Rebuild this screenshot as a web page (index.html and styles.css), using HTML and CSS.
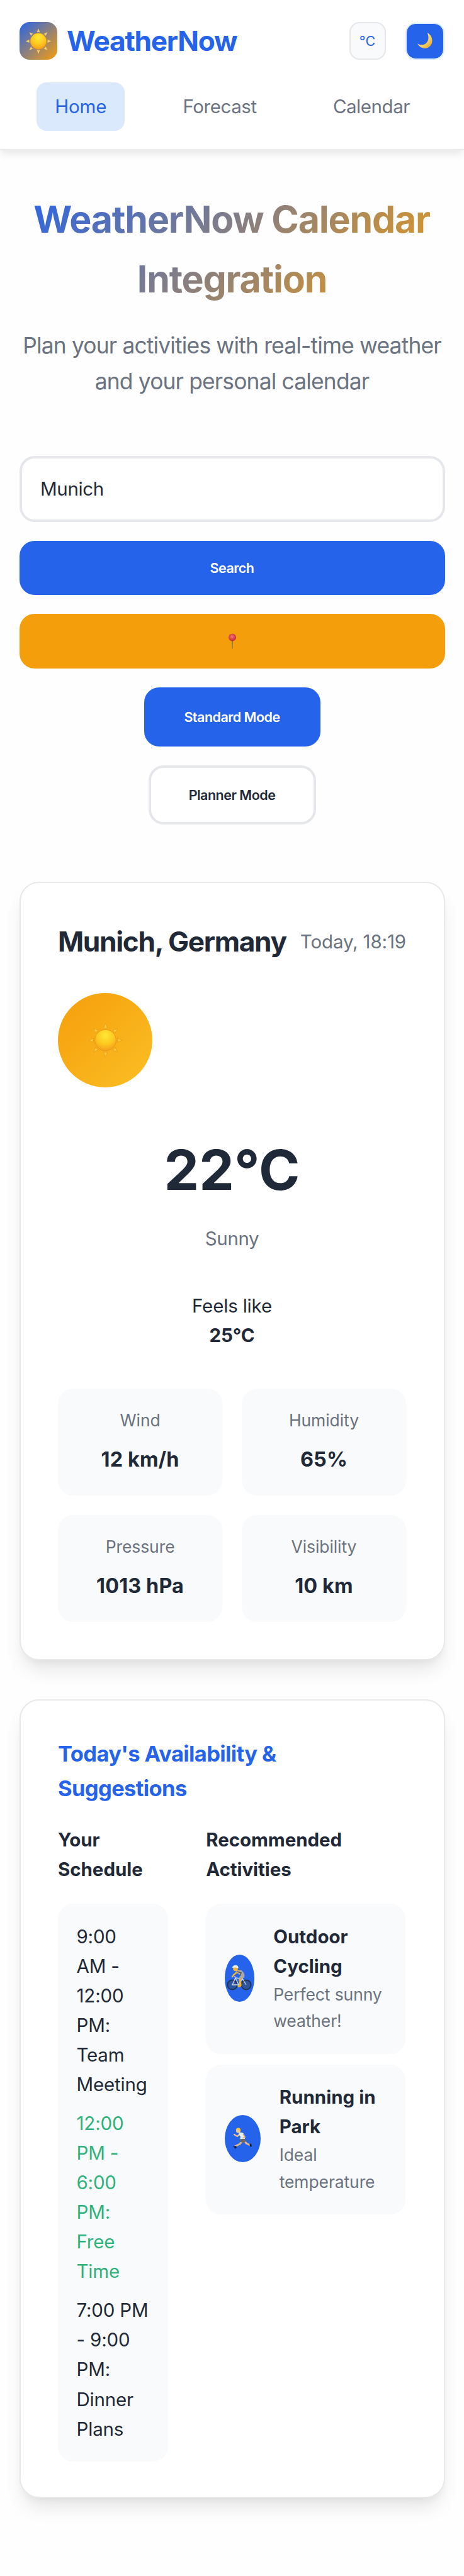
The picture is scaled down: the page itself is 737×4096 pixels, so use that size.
FILE: index.html
```html
<!DOCTYPE html>
<html lang="en">
<head>
<meta charset="utf-8">
<title>WeatherNow</title>
<link rel="stylesheet" href="styles.css">
</head>
<body>
<svg width="0" height="0" class="defs" aria-hidden="true">
  <defs>
    <radialGradient id="sunfill" cx="50%" cy="28%" r="75%">
      <stop offset="0" stop-color="#ffe838"/><stop offset=".55" stop-color="#fdc81f"/><stop offset="1" stop-color="#f39a1b"/>
    </radialGradient>
    <linearGradient id="moonfill" x1="0" y1="0" x2="1" y2="1">
      <stop offset="0" stop-color="#fff0a8"/><stop offset=".6" stop-color="#f6d060"/><stop offset="1" stop-color="#d99a30"/>
    </linearGradient>
    <radialGradient id="pinfill" cx="45%" cy="40%" r="60%">
      <stop offset="0" stop-color="#f2787c"/><stop offset="1" stop-color="#c9222c"/>
    </radialGradient>
    <symbol id="sun" viewBox="0 0 60 60">
      <path id="ray" d="M30 1l3.4 8.6q-3.4-1.4-6.8 0z"/>
      <use href="#ray" transform="rotate(45 30 30)"/>
      <use href="#ray" transform="rotate(90 30 30)"/>
      <use href="#ray" transform="rotate(135 30 30)"/>
      <use href="#ray" transform="rotate(180 30 30)"/>
      <use href="#ray" transform="rotate(225 30 30)"/>
      <use href="#ray" transform="rotate(270 30 30)"/>
      <use href="#ray" transform="rotate(315 30 30)"/>
      <circle cx="30" cy="30" r="18.4" fill="url(#sunfill)" stroke="#e8951a" stroke-width="1"/>
    </symbol>
  </defs>
</svg>

<header class="header">
  <div class="bar">
    <div class="brand">
      <span class="logo"><svg class="logo-sun"><use href="#sun"/></svg></span>
      <span class="brand-name">WeatherNow</span>
    </div>
    <div class="tools">
      <button class="unit">°C</button>
      <button class="theme"><svg viewBox="0 0 26 28" width="26" height="28"><path d="M16.700 1C22.500 4 25.800 10.500 24 17.500 21.500 26.500 8 30 1 18.500 8 22 14 20.500 17 15 19.300 10.800 18.700 5.500 16.700 1z" fill="url(#moonfill)"/></svg></button>
    </div>
  </div>
  <nav class="nav">
    <a class="nav-link active">Home</a>
    <a class="nav-link">Forecast</a>
    <a class="nav-link">Calendar</a>
  </nav>
</header>

<main class="main">
  <section class="hero">
    <h1 class="hero-title">WeatherNow Calendar<br>Integration</h1>
    <p class="hero-text">Plan your activities with real-time weather<br>and your personal calendar</p>
  </section>

  <section class="search">
    <div class="field">Munich</div>
    <button class="btn primary">Search</button>
    <button class="btn locate"><svg viewBox="0 0 14 26" width="14" height="26"><path d="M6 10h2.200l-.5 14.500h-1.200z" fill="#8b7a58"/><circle cx="7" cy="6.500" r="5.900" fill="url(#pinfill)"/></svg></button>
    <button class="mode primary">Standard Mode</button>
    <button class="mode outline">Planner Mode</button>
  </section>

  <section class="card weather">
    <div class="place"><h2 class="city">Munich, Germany</h2><span class="date">Today, 18:19</span></div>
    <div class="condition-icon"><svg class="big-sun"><use href="#sun"/></svg></div>
    <div class="temp">22°C</div>
    <div class="condition">Sunny</div>
    <div class="feels">Feels like<br><strong>25°C</strong></div>
    <div class="metrics">
      <div class="metric"><span class="label">Wind</span><span class="value">12 km/h</span></div>
      <div class="metric"><span class="label">Humidity</span><span class="value">65%</span></div>
      <div class="metric"><span class="label">Pressure</span><span class="value">1013 hPa</span></div>
      <div class="metric"><span class="label">Visibility</span><span class="value">10 km</span></div>
    </div>
  </section>

  <section class="card planner">
    <h3 class="planner-title">Today's Availability &amp;<br>Suggestions</h3>
    <div class="columns">
      <div class="column">
        <h4 class="column-title">Your<br>Schedule</h4>
        <div class="schedule">
          <p class="slot">9:00<br>AM -<br>12:00<br>PM:<br>Team<br>Meeting</p>
          <p class="slot free">12:00<br>PM -<br>6:00<br>PM:<br>Free<br>Time</p>
          <p class="slot">7:00 PM<br>- 9:00<br>PM:<br>Dinner<br>Plans</p>
        </div>
      </div>
      <div class="column">
        <h4 class="column-title">Recommended<br>Activities</h4>
        <div class="activities">
          <div class="activity">
            <span class="badge cycling"><svg viewBox="0 0 40 42" width="40" height="42">
              <g fill="#35507f" fill-opacity=".7" stroke="#20304f" stroke-width="1.800"><circle cx="9" cy="32" r="7.600"/><circle cx="31" cy="32" r="7.600"/></g>
              <path d="M9 32l5-11 11 1-6 10zM14 21l5 11M25 22l6 10M12 18.500l3 2" fill="none" stroke="#cfd8e6" stroke-width="1.300"/>
              <path d="M17 11l-6 5.500-2 2.500" fill="none" stroke="#eab33a" stroke-width="2.600" stroke-linecap="round"/>
              <path d="M26 19l-5 4 1 10-4 2" fill="none" stroke="#f0b429" stroke-width="3.400" stroke-linejoin="round"/>
              <path d="M15 9q8-3 12 4 3 5 0 8l-6 2-1-3 2-3-6-4z" fill="#aaa9a6"/>
              <path d="M17 11l6 2-2 5" fill="none" stroke="#55575e" stroke-width="1.600"/>
              <circle cx="14" cy="6.500" r="3.800" fill="#f3b52f"/>
              <path d="M8.800 5q1-4.500 6-4.300 4 .6 3.800 5l-4-1.200z" fill="#eef0f2"/>
            </svg></span>
            <div class="activity-text"><strong>Outdoor<br>Cycling</strong><span class="note">Perfect sunny<br>weather!</span></div>
          </div>
          <div class="activity">
            <span class="badge running"><svg viewBox="0 0 32 36" width="32" height="36">
              <path d="M17 20l-5 6-8 4" fill="none" stroke="#e3b583" stroke-width="3" stroke-linejoin="round"/>
              <path d="M19 20l3 5 6 3" fill="none" stroke="#e3b583" stroke-width="3" stroke-linejoin="round"/>
              <path d="M1 30l5-1 1 2-2 3zM27 27l3-2 1 5-2 1z" fill="#1b2340"/>
              <path d="M12 10l-4 4-5-3" fill="none" stroke="#edbb86" stroke-width="2.200" stroke-linecap="round" stroke-linejoin="round"/>
              <path d="M11 8q6-1 7 2l2 8-2 2h-6l1-6-3-3z" fill="#e9eef6"/>
              <path d="M12 18h8l2 4-4 2-5-1z" fill="#6d6c61"/>
              <path d="M17 10l3 5-4 2" fill="none" stroke="#e3b583" stroke-width="1.900"/>
              <circle cx="9.500" cy="5" r="3.600" fill="#f3c48e"/>
              <path d="M5.500 3.500q1-3.500 5-3 3.500 1 2.500 5.500l-2-2z" fill="#f4c63b"/>
            </svg></span>
            <div class="activity-text"><strong>Running in<br>Park</strong><span class="note">Ideal<br>temperature</span></div>
          </div>
        </div>
      </div>
    </div>
  </section>
</main>
</body>
</html>
```
FILE: styles.css
```css
* { box-sizing: border-box; margin: 0; padding: 0; }
html { background: #fefefe; }
body {
  width: 737px;
  min-height: 4096px;
  overflow-x: hidden;
  background: #fefefe;
  color: #1f2937;
  font: 400 29.5px/47.1px Inter, "Liberation Sans", sans-serif;
}
button { font-family: inherit; border: 0; display: flex; align-items: center; justify-content: center; }
svg { display: block; }
strong { font-weight: 700; }
.defs { position: absolute; }

.header {
  padding: 35.4px 31px 29px 30.5px;
  background: #fff;
  border-bottom: 2px solid #e8e9eb;
  box-shadow: 0 8px 12px -2px rgba(0, 0, 0, .09);
}
.bar { display: flex; justify-content: space-between; align-items: center; height: 60px; }
.brand { display: flex; align-items: center; gap: 15.5px; }
.logo {
  display: flex; align-items: center; justify-content: center;
  width: 60px; height: 60px; border-radius: 16px;
  background: linear-gradient(135deg, #2563eb, #f59e0b);
}
.logo-sun { width: 42px; height: 43px; fill: #f7cf6a; }
.brand-name { color: #2563eb; font-size: 44.2px; font-weight: 700; letter-spacing: -.0277em; }
.tools { display: flex; gap: 31.500px; align-items: center; }
.unit {
  width: 58px; height: 60px; border-radius: 16px;
  background: #f9fafb; border: 2px solid #e5e7eb;
  color: #2563eb; font-size: 21.500px;
}
.theme { width: 62px; height: 59px; border-radius: 16px; background: #2563eb; border: 2px solid #dbeafe; background-clip: padding-box; }
.nav { display: flex; justify-content: space-between; margin: 35.800px 26px 0 27.800px; }
.nav-link { height: 77px; padding: 0 29px; line-height: 77px; border-radius: 16px; color: #6b7280; letter-spacing: -.015em; }
.nav-link.active { background: #dbe9fc; color: #2563eb; letter-spacing: -.006em; }

.main { padding: 62px 30.500px 0; }
.hero { text-align: center; }
.hero-title {
  font-size: 59px; line-height: 95px; font-weight: 700; letter-spacing: -.0205em;
  background: linear-gradient(135deg, #2563eb, #f59e0b);
  -webkit-background-clip: text; background-clip: text; color: transparent;
  text-indent: -1px;
}
.hero-text { margin-top: 31px; font-size: 35.400px; line-height: 56.500px; letter-spacing: -.0236em; color: #6b7280; white-space: nowrap; }

.search { display: flex; flex-direction: column; align-items: center; gap: 30.200px; margin-top: 90px; }
.field {
  width: 100%; height: 104.400px; padding: 0 29.500px; line-height: 96.400px;
  border: 4px solid #e5e7eb; border-radius: 24px; background: #fff; letter-spacing: -.012em;
}
.btn { width: 100%; height: 86.500px; border-radius: 24px; }
.btn, .mode { font-size: 21.500px; font-weight: 600; letter-spacing: -.024em; }
.primary { background: #2563eb; color: #fff; }
.locate { background: #f59e0b; }
.mode { width: 280px; height: 93.600px; border-radius: 24px; }
.outline { width: 266px; background: #fff; color: #1f2937; border: 4px solid #e5e7eb; }

.card {
  padding: 58.500px 59.500px 59px;
  background: #fff; border: 2px solid #e8e9eb; border-radius: 31px;
  box-shadow: 0 20px 30px -6px rgba(0, 0, 0, .1), 0 8px 12px -4px rgba(0, 0, 0, .04);
}
.weather { margin-top: 91px; height: 1238px; }
.place { display: flex; justify-content: space-between; align-items: center; height: 70.700px; white-space: nowrap; }
.city { font-size: 44.200px; font-weight: 700; letter-spacing: -.0300em; }
.date { color: #6b7280; letter-spacing: -.0045em; }
.condition-icon {
  display: flex; align-items: center; justify-content: center;
  width: 150px; height: 150px; margin-top: 46.700px; border-radius: 50%;
  background: linear-gradient(135deg, #f59e0b, #fbbf24);
}
.big-sun { width: 55px; height: 60px; fill: #fccb3a; stroke: #e9981a; stroke-width: .8; }
.temp { margin-top: 59.500px; font-size: 88.400px; font-weight: 700; line-height: 141.400px; text-align: center; }
.condition { margin-top: 15.800px; text-align: center; color: #6b7280; letter-spacing: -.014em; }
.feels { margin-top: 60px; text-align: center; letter-spacing: -.006em; }
.feels strong { letter-spacing: 0; }
.metrics { display: grid; grid-template-columns: 1fr 1fr; gap: 30.700px; margin-top: 60.500px; }
.metric {
  display: flex; flex-direction: column; align-items: center; gap: 15.400px;
  height: 170px; padding-top: 29.500px; border-radius: 24px; background: #f9fafb;
}
.label { color: #6b7280; font-size: 26.500px; line-height: 42.400px; letter-spacing: -.003em; }
.value { font-size: 32.400px; line-height: 51.800px; font-weight: 700; letter-spacing: .004em; }

.planner { margin-top: 62.200px; height: 1270.600px; }
.planner-title { color: #2563eb; font-size: 34.500px; line-height: 54.700px; font-weight: 700; letter-spacing: -.018em; }
.columns { display: grid; grid-template-columns: 175px 317px; gap: 60.200px; margin-top: 30px; }
.column-title { font-size: 29.500px; line-height: 46.900px; font-weight: 700; letter-spacing: -.002em; margin-bottom: 31.400px; }
.schedule { padding: 28.700px 29.500px; border-radius: 24px; background: #f9fafb; white-space: nowrap; letter-spacing: -.006em; }
.slot + .slot { margin-top: 14.800px; }
.free { color: #2fb27c; }
.activities { display: grid; gap: 17px; }
.activity { display: flex; align-items: center; gap: 30px; padding: 28.700px 29.500px 31px; border-radius: 24px; background: #f9fafb; white-space: nowrap; }
.activity-text strong, .note { display: block; }
.note { color: #6b7280; font-size: 26.500px; line-height: 42.400px; letter-spacing: -.004em; }
.badge { display: flex; align-items: center; justify-content: center; height: 75px; border-radius: 50%; background: #2563eb; }
.cycling { width: 47.500px; }
.running { width: 57px; }
```
